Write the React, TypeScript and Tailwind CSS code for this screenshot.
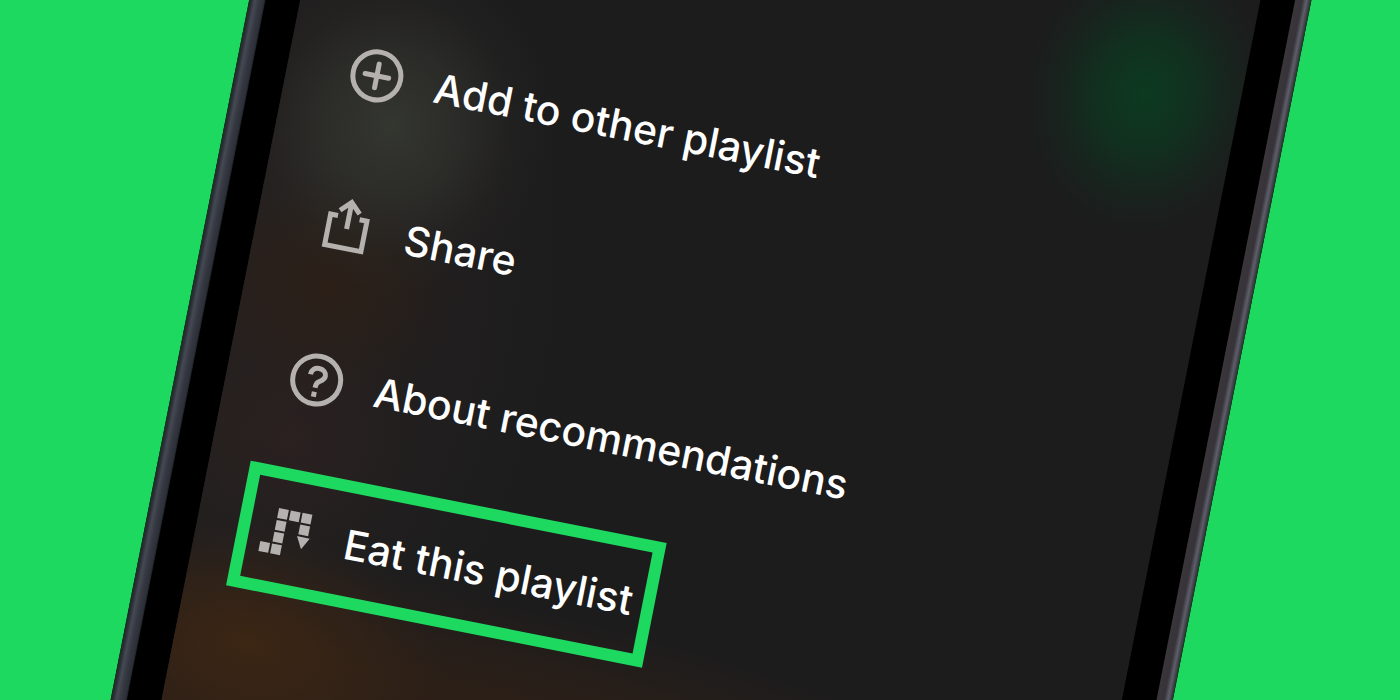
import React from "react";

interface MenuItem {
  label: string;
  icon: React.ReactNode;
  highlighted?: boolean;
}

const iconClass = "h-[54px] w-[54px] shrink-0 overflow-visible text-[#b5b1af]";

const AddIcon = () => (
  <svg className={iconClass} viewBox="0 0 54 54" fill="none" stroke="currentColor" strokeWidth={5} aria-hidden="true">
    <circle cx="27" cy="27" r="24" />
    <path strokeLinecap="round" d="M27 15v24M15 27h24" />
  </svg>
);

const ShareIcon = () => (
  <svg className={iconClass} viewBox="0 0 54 54" fill="none" stroke="currentColor" strokeWidth={5} aria-hidden="true">
    <path d="M16 16.5H8.5v31h37v-31H38" />
    <path d="M27 28V2M17 11L27 1l10 10" />
  </svg>
);

const HelpIcon = () => (
  <svg className={iconClass} viewBox="0 0 54 54" fill="none" stroke="currentColor" strokeWidth={5} aria-hidden="true">
    <circle cx="27" cy="27" r="24" />
    <path d="M19.8 22.5C19.8 18 23 15.200 27.200 15.200c4.300 0 7.600 2.600 7.600 6.400 0 3.400-2.300 4.800-4.800 6.400-2 1.300-3 2.500-3 5.500v1.500" />
    <rect x="24.5" y="39" width="5" height="5" fill="currentColor" stroke="none" />
  </svg>
);

// Pixel snake bent into the shape of a music note
const snake = [
  [20, 10],
  [32, 10],
  [44, 10],
  [20, 22],
  [44, 22],
  [20, 34],
  [20, 46],
  [8, 46],
];

const SnakeIcon = () => (
  <svg className={iconClass} viewBox="0 0 54 54" fill="currentColor" aria-hidden="true">
    {snake.map(([x, y]) => (
      <rect key={`${x}-${y}`} x={x - 5} y={y - 5} width="10" height="10" />
    ))}
    <path d="M38 29h13l-6.500 12z" />
  </svg>
);

const items: MenuItem[] = [
  { label: "Add to other playlist", icon: <AddIcon /> },
  { label: "Share", icon: <ShareIcon /> },
  { label: "About recommendations", icon: <HelpIcon /> },
  { label: "Eat this playlist", icon: <SnakeIcon />, highlighted: true },
];

const App: React.FC = () => {
  return (
    <main className="flex h-screen items-center justify-center overflow-hidden bg-[#1ed95f] pl-[22px] font-['Inter','Liberation_Sans',sans-serif]">
      {/* Phone */}
      <div className="flex h-[150vh] w-full max-w-[1042px] shrink-0 rotate-[11.2deg] bg-black">
        <div className="w-4 shrink-0 bg-[linear-gradient(90deg,#14301f,#2b2e36_15%,#454953_35%,#34373f_65%,#2c3038_90%,#1c1e22)]" />

        {/* Screen */}
        <div className="flex grow px-[34px]">
          <div className="flex grow flex-col justify-center bg-[#1c1c1d] bg-[radial-gradient(120px_140px_at_90%_18%,#0c3a20,#0c3a20aa_40%,#0c3a2033_75%,transparent),radial-gradient(160px_170px_at_12%_35%,#343630,#34363088_45%,#34363022_75%,transparent),radial-gradient(130px_110px_at_9%_51%,#2b1f17,#2b1f1788_50%,transparent),radial-gradient(130px_120px_at_8%_66%,#2a2120,#2a212088_50%,transparent),radial-gradient(190px_120px_at_8%_86%,#3c2614,#3c261488_45%,transparent),radial-gradient(700px_170px_at_30%_93%,#2f2016,#2f2016bb_50%,transparent),radial-gradient(360px_520px_at_0%_55%,#262120,transparent)] pt-[57px] pl-[41px]">
            <ul className="flex flex-col items-start gap-7">
              {items.map((item) => (
                <li key={item.label}>
                  <button
                    type="button"
                    className={`flex h-[127px] cursor-pointer items-center gap-8 border-12 px-[10px] text-left ${
                      item.highlighted ? "border-[#1ed95f]" : "border-transparent"
                    }`}
                  >
                    {item.icon}
                    <span className="text-[41px] leading-[52px] font-medium whitespace-nowrap text-white">{item.label}</span>
                  </button>
                </li>
              ))}
            </ul>
          </div>
        </div>

        <div className="w-4 shrink-0 bg-[linear-gradient(90deg,#3a3639,#36333a_45%,#5f5e69_70%,#44444e_85%,#123a20)]" />
      </div>
    </main>
  );
};

export default App;
